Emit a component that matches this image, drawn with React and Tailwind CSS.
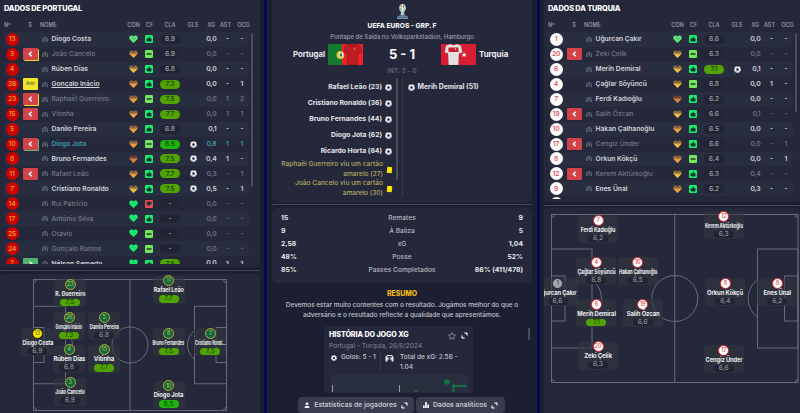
import React from 'react';

const portugal = [
    { n: 13, name: 'Diogo Costa', con: 'lime', cf: 'up', cla: '6.9', xg: '0,0', ast: '-', ocg: '-' },
    { n: 3, name: 'João Cancelo', sub: 'out', card: 'yellow', off: true, con: 'orange', cf: 'flat', cla: '6.9', xg: '0,0', ast: '-', ocg: '-' },
    { n: 4, name: 'Rúben Dias', con: 'yellow', cf: 'up', cla: '6.8', xg: '0,0', ast: '-', ocg: '-' },
    { n: 26, name: 'Gonçalo Inácio', sub: 'amr', underline: true, con: 'orange', cf: 'up', cla: '7.3', xg: '0,0', ast: '-', ocg: '1' },
    { n: 23, name: 'Raphaël Guerreiro', sub: 'out', card: 'yellow', off: true, con: 'orange', cf: 'flat', cla: '7.5', xg: '0,0', ast: '1', ocg: '2' },
    { n: 15, name: 'Vitinha', sub: 'out', off: true, con: 'orange', cf: 'up', cla: '7.7', xg: '0,0', ast: '1', ocg: '1' },
    { n: 5, name: 'Danilo Pereira', con: 'orange', cf: 'up', cla: '6.8', xg: '0,1', ast: '-', ocg: '-' },
    { n: 10, name: 'Diogo Jota', sub: 'out', card: 'green', best: true, con: 'orange', cf: 'flat', cla: '8.5', gls: true, xg: '0,8', ast: '1', ocg: '1' },
    { n: 8, name: 'Bruno Fernandes', con: 'rust', cf: 'up', cla: '7.5', gls: true, xg: '0,4', ast: '1', ocg: '-' },
    { n: 11, name: 'Rafael Leão', sub: 'out', off: true, con: 'orange', cf: 'up', cla: '7.7', gls: true, xg: '0,3', ast: '-', ocg: '1' },
    { n: 7, name: 'Cristiano Ronaldo', con: 'yellow', cf: 'up', cla: '7.5', gls: true, xg: '0,5', ast: '-', ocg: '1' },
    { n: 14, name: 'Rui Patrício', off: true, con: 'green', cf: 'down', cla: '-', xg: '0,0', ast: '-', ocg: '-' },
    { n: 17, name: 'António Silva', off: true, con: 'green', cf: 'up', cla: '-', xg: '0,0', ast: '-', ocg: '-' },
    { n: 25, name: 'Otávio', off: true, con: 'green', cf: 'flat', cla: '-', xg: '0,0', ast: '-', ocg: '-' },
    { n: 24, name: 'Gonçalo Ramos', off: true, con: 'green', cf: 'flat', cla: '-', xg: '0,0', ast: '-', ocg: '-' },
    { n: 2, name: 'Nélson Semedo', sub: 'in', con: 'green', cf: 'up', cla: '7.5', xg: '0,0', ast: '1', ocg: '1' },
];

const turquia = [
    { n: 1, name: 'Uğurcan Çakır', con: 'lime', cf: 'up', cla: '6.6', xg: '0,0', ast: '-', ocg: '-' },
    { n: 20, name: 'Zeki Çelik', sub: 'out', off: true, con: 'yellow', cf: 'flat', cla: '6.3', xg: '0,0', ast: '-', ocg: '-' },
    { n: 6, name: 'Merih Demiral', con: 'yellow', cf: 'up', cla: '7.1', gls: true, xg: '0,1', ast: '-', ocg: '-' },
    { n: 4, name: 'Çağlar Söyüncü', con: 'yellow', cf: 'flat', cla: '6.8', xg: '0,0', ast: '1', ocg: '-' },
    { n: 7, name: 'Ferdi Kadıoğlu', con: 'rust', cf: 'up', cla: '6.2', xg: '0,0', ast: '-', ocg: '-' },
    { n: 19, name: 'Salih Özcan', sub: 'out', off: true, con: 'yellow', cf: 'up', cla: '6.6', xg: '0,1', ast: '-', ocg: '-' },
    { n: 10, name: 'Hakan Çalhanoğlu', con: 'orange', cf: 'up', cla: '6.5', xg: '0,0', ast: '-', ocg: '-' },
    { n: 17, name: 'Cengiz Ünder', sub: 'out', off: true, con: 'yellow', cf: 'up', cla: '6.6', xg: '0,0', ast: '-', ocg: '1' },
    { n: 8, name: 'Orkun Kökçü', con: 'orange', cf: 'flat', cla: '6.4', xg: '0,0', ast: '-', ocg: '1' },
    { n: 12, name: 'Kerem Aktürkoğlu', sub: 'out', off: true, con: 'yellow', cf: 'up', cla: '6.3', xg: '0,4', ast: '-', ocg: '-' },
    { n: 9, name: 'Enes Ünal', con: 'orange', cf: 'up', cla: '6.2', xg: '0,3', ast: '-', ocg: '-' },
    { n: 3, name: '', con: '', cf: '', cla: '', xg: '', ast: '', ocg: '' },
];

// x / y are the centre of the shirt number, relative to the pitch panel
const portugalPitch = [
    { n: 13, name: 'Diogo Costa', r: '6,9', x: 37.3, y: 59.3, keeper: true, fit: 'scale-x-[0.82]' },
    { n: 23, name: 'R. Guerreiro', r: '7,5', x: 70, y: 10, fit: 'scale-x-[0.82]' },
    { n: 26, name: 'Gonçalo Inácio', r: '7,3', x: 69, y: 43, fit: 'scale-x-[0.58]' },
    { n: 4, name: 'Rúben Dias', r: '6,8', x: 69, y: 75.5, fit: 'scale-x-[0.92]' },
    { n: 3, name: 'João Cancelo', r: '6,9', x: 70, y: 108.5, fit: 'scale-x-[0.7]' },
    { n: 5, name: 'Danilo Pereira', r: '6,8', x: 104, y: 43, fit: 'scale-x-[0.68]' },
    { n: 15, name: 'Vitinha', r: '7,7', x: 104, y: 75.5, fit: 'scale-x-[0.94]' },
    { n: 11, name: 'Rafael Leão', r: '7,7', x: 168.5, y: 6.5, fit: 'scale-x-[0.84]' },
    { n: 8, name: 'Bruno Fernandes', r: '7,5', x: 168.5, y: 59.3, fit: 'scale-x-[0.6]' },
    { n: 10, name: 'Diogo Jota', r: '8,5', x: 168.5, y: 111.7, fit: 'scale-x-[0.9]' },
    { n: 7, name: 'Cristiano Ronal...', r: '7,5', x: 210.3, y: 59.3, fit: 'scale-x-[0.58]' },
];

const turquiaPitch = [
    { n: 1, name: 'Uğurcan Çakır', r: '6,6', x: 13.5, y: 75.3, keeper: true, fit: 'scale-x-[0.88]' },
    { n: 7, name: 'Ferdi Kadıoğlu', r: '6,2', x: 54, y: 12, fit: 'scale-x-[0.78]' },
    { n: 4, name: 'Çağlar Söyüncü', r: '6,8', x: 52.3, y: 54.3, fit: 'scale-x-[0.78]' },
    { n: 6, name: 'Merih Demiral', r: '7,1', x: 52.3, y: 96.3, fit: 'scale-x-[0.9]' },
    { n: 20, name: 'Zeki Çelik', r: '6,3', x: 54, y: 138.5, fit: 'scale-x-[0.92]' },
    { n: 10, name: 'Hakan Çalhanoğlu', r: '6,5', x: 93.7, y: 54.3, fit: 'scale-x-[0.68]' },
    { n: 19, name: 'Salih Özcan', r: '6,6', x: 98.7, y: 96.3, fit: 'scale-x-[0.9]' },
    { n: 12, name: 'Kerem Aktürkoğlu', r: '6,3', x: 179.7, y: 8, fit: 'scale-x-[0.68]' },
    { n: 8, name: 'Orkun Kökçü', r: '6,4', x: 181.3, y: 75.3, fit: 'scale-x-[0.9]' },
    { n: 17, name: 'Cengiz Ünder', r: '6,6', x: 179.7, y: 142.3, fit: 'scale-x-[0.88]' },
    { n: 9, name: 'Enes Ünal', r: '6,2', x: 233.3, y: 75.3, fit: 'scale-x-[0.9]' },
];

const stats = [
    ['15', 'Remates', '9'],
    ['9', 'À Baliza', '5'],
    ['2,58', 'xG', '1,04'],
    ['48%', 'Posse', '52%'],
    ['85%', 'Passes Completados', '86% (411/478)'],
];

const goals = ['Rafael Leão (23)', 'Cristiano Ronaldo (36)', 'Bruno Fernandes (44)', 'Diogo Jota (62)', 'Ricardo Horta (84)'];
const cards = [['Raphaël Guerreiro viu um cartão', 'amarelo (27)'], ['João Cancelo viu um cartão', 'amarelo (30)']];

const heartColors = {
    lime: ['#5fe878', '#5fe878'],
    green: ['#14f070', '#14f070'],
    yellow: ['#8a6f3c', '#f2bd48'],
    orange: ['#8d6640', '#f0a043'],
    rust: ['#6b4437', '#d98348'],
};

function ratingClass(value) {
    const v = parseFloat(value.replace(',', '.'));
    if (v >= 8) return 'bg-[#1fb40c] text-[#123d0b]';
    if (v >= 7) return 'bg-[#50a400] text-[#1d3a0a]';
    return 'bg-[#202433] text-[#a3a5ad]';
}

function Heart({ tone }) {
    const [top, bottom] = heartColors[tone];
    const full = top === bottom;
    return (
        <svg className="h-[8.500px] w-[9px]" viewBox="0 0 20 18">
            <path d="M10 17.500 1.800 9.500C-.8 6 1 .8 5.200.8 7.500.8 9 2 10 3.400 11 2 12.500.8 14.800.8 19 .8 20.800 6 18.200 9.500Z" fill={top} />
            {!full && <path d="M.8 7.500h18.400L10 17.500Z" fill={bottom} />}
            <path d="M5.500 7.500 8 6l3 3 3.500-2" fill="none" stroke="#25293b" strokeOpacity={full ? 0.5 : 0.3} strokeWidth="1.200" />
        </svg>
    );
}

function Form({ kind }) {
    const fill = { up: '#16f06c', flat: '#72e85c', down: '#ee4b59' }[kind];
    return (
        <svg className="h-[8px] w-[8px]" viewBox="0 0 16 16">
            <rect width="16" height="16" rx="2.500" fill={fill} />
            {kind === 'flat' ? (
                <rect x="3" y="6.500" width="10" height="3" fill="#203a35" />
            ) : (
                <path
                    d="M3 7h3l2.500-4c1.500 0 1.800 1 1.300 3.500H13V12l-1 1H6l-3-1Z"
                    fill="#17372f"
                    transform={kind === 'down' ? 'rotate(180 8 8)' : undefined}
                />
            )}
        </svg>
    );
}

function Ball({ className }) {
    return (
        <svg className={className} viewBox="0 0 14 14">
            <circle cx="7" cy="7" r="6.500" fill="#f1f2f5" />
            <path d="m7 4.200 2.700 2-1 3.100H5.300l-1-3.100Z" fill="#25293b" />
            <path d="M5.500.7 7 1.900 8.500.7ZM.5 6.500l1.700-1.200L1.700 3.500ZM13.500 6.500l-1.700-1.200.5-1.800ZM3 12l.3-2 1.900.6ZM11 12l-.3-2-1.900.6Z" fill="#25293b" />
        </svg>
    );
}

function Expand() {
    return (
        <svg className="h-[7px] w-[7px]" viewBox="0 0 14 14" fill="none" stroke="#dcdde3" strokeWidth="2">
            <path d="M6.500 2H12v5.500M7.500 12H2V6.500" />
            <path d="M9.500 2H12v2.500ZM4.500 12H2V9.500Z" fill="#dcdde3" />
        </svg>
    );
}

function SubBadge({ sub, card }) {
    if (!sub) return null;
    if (sub === 'amr') {
        return (
            <span className="flex h-[12px] w-[15px] items-center justify-center rounded-[1px] bg-[#f0e52a] text-[4.5px] font-semibold text-[#6d6a35]">
                Amr
            </span>
        );
    }
    const shadow = card === 'yellow' ? 'shadow-[1px_1px_0_#e8dc2a]' : card === 'green' ? 'shadow-[1px_1px_0_#62b878]' : '';
    return (
        <span className={`flex h-[12px] w-[15px] items-center justify-center rounded-[1px] ${sub === 'in' ? 'bg-[#52b16f]' : 'bg-[#d04349]'} ${shadow}`}>
            <svg className="h-[6px] w-[5px]" viewBox="0 0 10 12" fill="none" stroke="#fff" strokeWidth="2.800">
                <path d={sub === 'in' ? 'm3 1.500 5 4.500-5 4.500' : 'M7.500 1.500 2.500 6l5 4.500'} />
            </svg>
        </span>
    );
}

function PlayerRow({ p, home, striped }) {
    const color = p.best ? 'text-[#3b9aa9]' : p.off ? 'text-[#777a86]' : 'text-[#d3d4da]';
    const weight = p.off ? 'font-medium' : 'font-semibold';
    return (
        <div className={`flex h-[14.95px] w-[245px] shrink-0 items-center rounded-[2px] text-[6.7px] ${color} ${weight} ${striped ? 'bg-[#292d40]' : ''}`}>
            <div className="flex w-[16px] justify-center">
                <span
                    className={`flex size-[13px] shrink-0 items-center justify-center rounded-full text-[6.8px] font-medium tracking-tight ${
                        home ? 'bg-[#cb0300] text-[#f3a13a]' : 'bg-[#fafafa] text-[#e5484c]'
                    }`}
                >
                    {p.name ? p.n : ''}
                </span>
            </div>
            <div className="flex w-[21px] justify-center"><SubBadge sub={p.sub} card={p.card} /></div>
            <div className="flex w-[8px] justify-center">
                {p.name && (
                    <svg className="h-[5px] w-[6px]" viewBox="0 0 12 10" fill="none" stroke="#858894" strokeWidth="1.300">
                        <path d="M1 9V5a5 4 0 0 1 10 0v4H8.500M1 9h2.500" />
                        <circle cx="6" cy="5.500" r="1.800" />
                    </svg>
                )}
            </div>
            <div className={`w-[76px] whitespace-nowrap pl-[2.500px] ${p.underline ? 'underline underline-offset-1' : ''}`}>{p.name}</div>
            {p.name && (
                <>
                    <div className="flex w-[16px] justify-center"><Heart tone={p.con} /></div>
                    <div className="flex w-[16px] justify-center"><Form kind={p.cf} /></div>
                    <div className="flex w-[26px] justify-center">
                        <span className={`flex h-[9px] w-[20px] items-center justify-center rounded-full font-medium ${ratingClass(p.cla)}`}>{p.cla}</span>
                    </div>
                    <div className="flex w-[20px] justify-center">{p.gls && <Ball className="size-[7px]" />}</div>
                    <div className="w-[13.500px] text-right text-[6.8px] tracking-tight">{p.xg}</div>
                    <div className="w-[22px] text-center">{p.ast}</div>
                    <div className="w-[7px] text-center">{p.ocg}</div>
                </>
            )}
        </div>
    );
}

function TeamTable({ title, players, home, listClass, thumbClass }) {
    return (
        <section className="flex flex-col rounded-b-[4px] bg-[#24283a] pl-1">
            <h2 className="flex h-[17px] items-center text-[7.400px] font-extrabold tracking-[-0.150px] text-white">{title}</h2>
            <div className="flex h-[15px] items-center pt-px text-[5.500px] font-semibold text-[#9395a0]">
                <span className="w-[16px]">Nº</span>
                <span className="w-[20px] text-center">S</span>
                <span className="w-[85px]">NOME</span>
                <span className="w-[17px] text-center">CON</span>
                <span className="w-[15px] text-center">CF</span>
                <span className="w-[26px] text-center">CLA</span>
                <span className="w-[20px] text-center">GLS</span>
                <span className="w-[12px] text-right">XG</span>
                <span className="w-[21px] text-center">AST</span>
                <span className="w-[15px] text-center">OCG</span>
            </div>
            <div className={`flex overflow-hidden ${listClass}`}>
                <div className="flex flex-col">
                    {players.map((p, i) => (
                        <PlayerRow key={p.n} p={p} home={home} striped={i % 2 === 0} />
                    ))}
                </div>
                <div className={`ml-[2px] mt-[1px] w-[2px] shrink-0 rounded-full bg-[#4a4d5b] ${thumbClass}`} />
            </div>
        </section>
    );
}

function PitchNode({ p, home }) {
    let circle = home ? 'border-[#c4a832] bg-[#0b6b45] text-[#c9ae3a]' : 'border-[#d8232f] bg-white text-[#e03a3f]';
    if (p.keeper) circle = home ? 'border-[#15161c] bg-[#f7e600] text-[#6c6620]' : 'border-[#2c303c] bg-[#a2a7ad] text-[#3c4048]';
    return (
        <div
            className={`absolute flex h-[28px] -translate-x-1/2 flex-col items-center rounded-[4px] bg-[#33363f]/60 ${home ? 'w-[32px]' : 'w-[40px]'}`}
            style={{ left: p.x, top: p.y - 5 }}
        >
            <span className={`-mt-[0.500px] flex size-[11px] shrink-0 items-center justify-center rounded-full border-[1.500px] text-[5.500px] font-medium tracking-tight ${circle}`}>
                {p.n}
            </span>
            <span className={`h-[9px] whitespace-nowrap text-[6.5px] font-bold leading-[9px] tracking-[-0.1px] text-[#eceded] ${p.fit}`}>{p.name}</span>
            <span className={`flex h-[7.500px] w-[20px] shrink-0 items-center justify-center rounded-full text-[6.8px] leading-none ${ratingClass(p.r)}`}>{p.r}</span>
        </div>
    );
}

function PitchLines({ x, y, w, h, pw, ph, gw, gh, r, spot }) {
    const cy = y + h / 2;
    const arc = pw - spot;
    const dy = Math.sqrt(r * r - arc * arc);
    return (
        <svg className="h-full w-full" fill="none" stroke="#686b79" strokeWidth="1">
            <rect x={x} y={y} width={w} height={h} />
            <path d={`M${x + w / 2} ${y}v${h}`} />
            <circle cx={x + w / 2} cy={cy} r={r} />
            <rect x={x} y={cy - ph / 2} width={pw} height={ph} />
            <rect x={x} y={cy - gh / 2} width={gw} height={gh} />
            <rect x={x + w - pw} y={cy - ph / 2} width={pw} height={ph} />
            <rect x={x + w - gw} y={cy - gh / 2} width={gw} height={gh} />
            <path d={`M${x + pw} ${cy - dy}A${r} ${r} 0 0 1 ${x + pw} ${cy + dy}`} />
            <path d={`M${x + w - pw} ${cy - dy}A${r} ${r} 0 0 0 ${x + w - pw} ${cy + dy}`} />
            <path
                d={`M${x} ${y + 3}a3 3 0 0 0 3-3M${x + w - 3} ${y}a3 3 0 0 0 3 3M${x} ${y + h - 3}a3 3 0 0 1 3 3M${x + w - 3} ${y + h}a3 3 0 0 1 3-3`}
            />
        </svg>
    );
}

function Trophy() {
    return (
        <svg className="h-[16px] w-[13px] shrink-0" viewBox="0 0 26 32">
            <ellipse cx="13" cy="8" rx="6.500" ry="8" fill="#dfe5e2" />
            <path d="M8 4 12 1v6Z" fill="#e8674a" />
            <path d="m14 1 4 4-4 3Z" fill="#47a67a" />
            <path d="m7 9 5 0-2 5Z" fill="#3fa3c9" />
            <path d="m14 10 5-2-3 6Z" fill="#efb83e" />
            <path d="M10 15h6l1 8H9Z" fill="#b5c9d2" />
            <path d="M5 23h16l3 3H2Z" fill="#5d87a5" />
            <path d="M2 27h22v2.500H2Z" fill="#8eb7cf" />
        </svg>
    );
}

function Shirt({ fill, band }) {
    return (
        <svg className="h-[23px] w-[19px] shrink-0" viewBox="0 0 38 46">
            <path d="M13 2 4 5 1 19l7 2 1 23h20l1-23 7-2-3-14-9-3c-3 3-9 3-12 0Z" fill={fill} stroke="#00000040" />
            {band && <rect x="9" y="9" width="20" height="9" fill="#c9202b" />}
            {!band && <path d="M13 2c3 3 9 3 12 0l1 2c-4 3-10 3-14 0Z" fill="#8f1218" />}
            <circle cx="23" cy="12" r="1.500" fill={band ? '#f4f4f4' : '#e9a0a0'} />
        </svg>
    );
}

function MatchPanel() {
    return (
        <section className="flex h-[203px] flex-col items-center rounded-b-[5px] bg-[#24283a] pt-[3.500px]">
            <Trophy />
            <h1 className="flex h-[12px] items-center pt-[1.500px] text-[6.700px] font-extrabold text-[#f0f0f3]">UEFA EUROS - GRP. F</h1>
            <p className="flex h-[9px] items-center pt-px text-[6.100px] font-medium tracking-[-0.050px] text-[#9c9eaa]">Pontapé de Saída no Volksparkstadion, Hamburgo</p>
            <div className="mt-[2.500px] flex h-[23px] w-full items-center">
                <div className="w-[53px] text-right text-[7.700px] font-bold text-[#eeeef1]">Portugal</div>
                <div className="ml-[3px] flex h-[21px] w-[35px] items-center bg-linear-to-r from-[#147a2d] from-40% to-[#ee2228] to-40%">
                    <svg className="ml-[8px] h-[12px] w-[8px] shrink-0" viewBox="0 0 16 24">
                        <circle cx="9" cy="12" r="8" fill="#e4cb2a" />
                        <rect x="6" y="7" width="8" height="10" fill="#e8e5e5" />
                        <rect x="8" y="9" width="4" height="6" fill="#3a5aa0" />
                    </svg>
                    <span className="-ml-[1px] flex"><Shirt fill="#bf1c23" /></span>
                </div>
                <div className="w-[78px] text-center text-[13px] font-bold text-white">5 - 1</div>
                <div className="flex h-[21px] w-[35px] items-center bg-[#da1d33] pl-[3px]">
                    <Shirt fill="#e3e2e0" band />
                    <span className="-ml-[2px] text-[6px] text-white">★</span>
                </div>
                <div className="ml-[3px] text-[7.900px] font-bold text-[#eeeef1]">Turquia</div>
            </div>
            <div className="flex h-[12px] items-start text-[6.200px] font-medium leading-[9px] tracking-[0.150px] text-[#6f727f]">INT: 3 - 0</div>
            <div className="flex w-full">
                <div className="flex w-[120px] flex-col items-end pt-[1px] text-[6.800px]">
                    {goals.map((g) => (
                        <div key={g} className="flex h-[16px] items-center gap-[3px] font-bold text-[#e4e5ea]">
                            {g}
                            <Ball className="size-[7px]" />
                        </div>
                    ))}
                    <div className="pt-[1px]">
                        {cards.map(([a, b]) => (
                            <div key={a} className="flex h-[19.300px] items-center justify-end gap-[3.500px] text-right text-[6.600px] font-medium leading-[9.700px] text-[#b3a961]">
                                <div className="whitespace-nowrap">{a}<br />{b}</div>
                                <span className="mr-[1px] h-[6px] w-[4.500px] rotate-6 bg-[#fbe800]" />
                            </div>
                        ))}
                    </div>
                </div>
                <div className="ml-[4px] h-[102px] w-[2px] rounded-full bg-[#4a4d5b]" />
                <div className="ml-[4px] h-[118px] w-px bg-[#393b42]" />
                <div className="flex h-[16px] items-center gap-[3px] pl-[4.500px] pt-[2px] text-[6.900px] font-bold text-[#e4e5ea]">
                    <Ball className="size-[7px]" />
                    Merih Demiral (51)
                </div>
            </div>
        </section>
    );
}

function XgCard() {
    return (
        <div className="ml-[52px] flex h-[67px] w-[149px] flex-col overflow-hidden rounded-t-[4px] bg-[#24283a] px-[5px] pt-[4px]">
            <div className="flex h-[11px] shrink-0 items-center">
                <h3 className="flex-1 whitespace-nowrap text-[7.200px] font-extrabold tracking-[-0.100px] text-white">HISTÓRIA DO JOGO XG</h3>
                <svg className="mr-[5px] size-[8px]" viewBox="0 0 16 16" fill="none" stroke="#a8aab3" strokeWidth="1.300">
                    <path d="m8 1.200 2 4.600 5 .5-3.800 3.300 1.100 4.900L8 12l-4.300 2.500 1.100-4.900L1 6.300l5-.5Z" />
                </svg>
                <Expand />
            </div>
            <p className="flex h-[12px] shrink-0 items-center text-[6.600px] text-[#85878f]">Portugal - Turquia, 26/6/2024</p>
            <div className="flex h-[20px] shrink-0 text-[6.500px] font-medium leading-[9.500px] text-[#c5c7cd]">
                <Ball className="ml-[2px] mt-[2px] size-[6px]" />
                <span className="w-[42px] whitespace-nowrap pl-[4px]">Golos: 5 - 1</span>
                <span className="ml-[1px] mr-[4px] h-[18px] w-px bg-[#353943]" />
                <svg className="mt-[0.500px] h-[8px] w-[9px]" viewBox="0 0 18 16" fill="#e5e6ea">
                    <path d="M1 15V6l3-4h10l3 4v9h-4v-4H5v4ZM5 4l-1 3h10l-1-3Z" />
                    <circle cx="9" cy="9" r="2" fill="#25293b" />
                </svg>
                <span className="pl-[6px]">Total de xG: 2.56 -<br />1.04</span>
            </div>
            <svg className="mx-[1.500px] mt-[1px] h-[18px] w-[137px] shrink-0" viewBox="0 0 137 18">
                <rect width="137" height="24" rx="4" fill="#2a2f40" />
                <path d="M1.500 11v8M68.500 11v8" stroke="#9a9ca5" />
                <path d="M122.500 18v-6h13" fill="none" stroke="#11733f" strokeWidth="2" />
                <circle cx="116" cy="8" r="2.800" fill="#11733f" />
                <circle cx="122.500" cy="12" r="1.800" fill="#11733f" />
                <circle cx="85" cy="18.500" r="2" fill="#11733f" />
            </svg>
        </div>
    );
}

export default function App() {
    return (
        <main className="flex h-[413px] w-[800px] overflow-hidden bg-[#1b1f31] font-[Inter,'Noto_Sans',sans-serif]">
            <div className="flex w-[260px] flex-col">
                <TeamTable title="DADOS DE PORTUGAL" players={portugal} home listClass="h-[232px] mb-[3px]" thumbClass="h-[154px]" />
                <div className="my-[3px] h-px w-full bg-[#44475a]" />
                <section className="relative flex-1 overflow-hidden rounded-t-[4px] bg-[#24283a]">
                    <PitchLines x={33.5} y={5.5} w={193} h={131} pw={32} ph={77.500} gw={10.500} gh={35} r={18} spot={21} />
                    {portugalPitch.map((p) => <PitchNode key={p.n} p={p} home />)}
                </section>
            </div>

            <div className="mx-[4px] w-[3px] bg-[#04065a]" />

            <div className="mx-[1px] flex w-[260px] shrink-0 flex-col">
                <MatchPanel />
                <div className="mt-[2px] h-px shrink-0 bg-[#44475a]" />
                <section className="mt-[3px] flex h-[75px] shrink-0 flex-col rounded-[5px] bg-[#24283a] px-[9px] pt-[4px]">
                    {stats.map(([a, label, b]) => (
                        <div key={label} className="flex h-[12.870px] shrink-0 items-center text-[6.800px] font-bold text-[#e9eaee]">
                            <span className="w-[70px]">{a}</span>
                            <span className="flex-1 text-center text-[6.700px] font-medium text-[#b5b7c0]">{label}</span>
                            <span className="w-[70px] text-right">{b}</span>
                        </div>
                    ))}
                </section>
                <h2 className="mt-[5px] flex h-[12px] shrink-0 items-center justify-center text-[6.900px] font-extrabold text-[#f0b90f]">RESUMO</h2>
                <p className="h-[26px] shrink-0 whitespace-nowrap text-center text-[6.500px] font-medium leading-[10px] tracking-[-0.030px] text-[#bfc1c9]">
                    Devemos estar muito contentes com o resultado. Jogámos melhor do que o
                    <br />
                    adversário e o resultado reflecte a qualidade que apresentámos.
                </p>
                <div className="relative shrink-0">
                    <XgCard />
                    <div className="absolute right-[2px] top-[2px] h-[12px] w-[2px] rounded-full bg-[#4a4d5b]" />
                </div>
                <div className="-ml-[1px] mt-[4px] flex shrink-0 justify-center gap-[2px] text-[6.800px] font-semibold text-[#c4c6cd]">
                    <button className="flex h-[16px] w-[116px] items-center justify-center gap-[4px] rounded-[4px] bg-[#393c4e]">
                        <svg className="size-[6px]" viewBox="0 0 12 12" fill="#f0f0f3">
                            <circle cx="6" cy="3.500" r="3" />
                            <path d="M1 12c0-3 2-4 3-4h4c1 0 3 1 3 4Z" />
                        </svg>
                        Estatísticas de jogadores
                        <Expand />
                    </button>
                    <button className="flex h-[16px] w-[89px] items-center justify-center gap-[4px] rounded-[4px] bg-[#393c4e]">
                        <svg className="size-[6px]" viewBox="0 0 12 12" fill="#f0f0f3">
                            <path d="M0 7h3.500v5H0ZM4.200 0h3.500v12H4.200ZM8.500 5H12v7H8.500Z" />
                        </svg>
                        Dados analíticos
                        <Expand />
                    </button>
                </div>
            </div>

            <div className="mx-[4px] w-[3px] bg-[#04065a]" />

            <div className="flex w-[256px] shrink-0 flex-col">
                <TeamTable title="DADOS DA TURQUIA" players={turquia} listClass="h-[167px] mb-[3px]" thumbClass="h-[79px]" />
                <div className="my-[2.500px] h-px w-full bg-[#44475a]" />
                <section className="relative flex-1 overflow-hidden rounded-t-[4px] bg-[#24283a]">
                    <PitchLines x={7.500} y={6.500} w={246.500} h={168} pw={40.500} ph={99} gw={13.500} gh={45} r={23} spot={27} />
                    {turquiaPitch.map((p) => <PitchNode key={p.n} p={p} />)}
                </section>
            </div>
        </main>
    );
}
